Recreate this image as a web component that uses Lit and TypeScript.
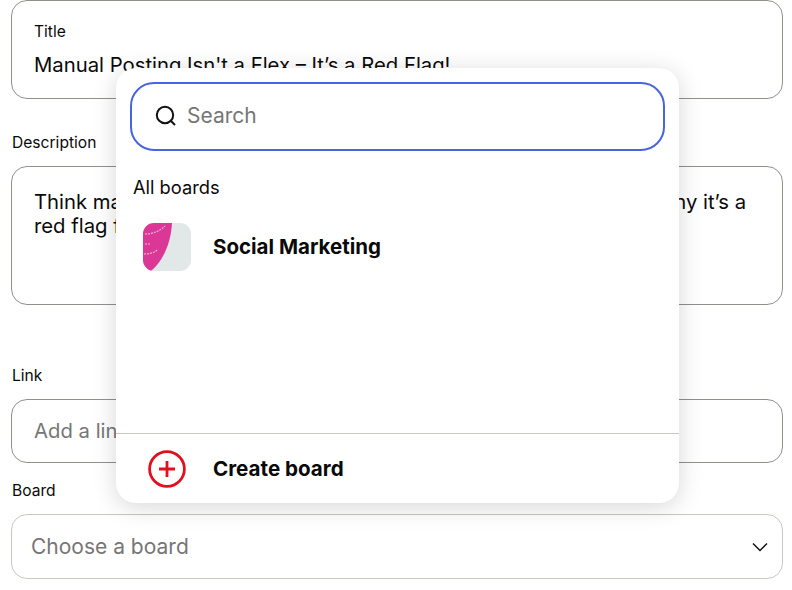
import { LitElement, html, css } from "lit";
import { customElement } from "lit/decorators.js";

@customElement("app-root")
export class AppRoot extends LitElement {
  static styles = css`
    :host {
      display: block;
      position: relative;
      width: 792px;
      height: 590px;
      overflow: hidden;
      background: #fff;
      color: #0a0a0a;
      font-family: Inter, "Noto Sans", sans-serif;
    }
    .form {
      display: flex;
      flex-direction: column;
      padding-left: 11px;
      width: 772px;
    }
    .label {
      font-size: 15.6px;
      line-height: 18px;
      height: 18px;
      margin-left: 1px;
    }
    .box {
      box-sizing: border-box;
      border: 1px solid #91918c;
      border-radius: 16px;
      font-size: 20.3px;
      line-height: 25px;
    }
    .title-box {
      height: 99px;
      padding: 22px 22px 0;
    }
    .title-box .label {
      margin: 0 0 11px;
    }
    .title-box .value {
      white-space: nowrap;
    }
    .desc-label {
      margin-top: 35px;
    }
    .desc-box {
      height: 139px;
      margin-top: 14px;
      padding: 23px 22px 0;
      line-height: 24px;
      white-space: nowrap;
    }
    .link-label {
      margin-top: 62px;
    }
    .link-box {
      height: 64px;
      margin-top: 14px;
      padding: 18px 22px 0;
      color: #767676;
    }
    .board-label {
      margin-top: 19px;
    }
    .board-box {
      display: flex;
      align-items: center;
      justify-content: space-between;
      height: 65px;
      margin-top: 14px;
      padding: 0 13px 0 19px;
      font-size: 21px;
      color: #767676;
      border-color: #c8c8c1;
    }
    .popover {
      position: absolute;
      left: 116px;
      top: 68px;
      width: 563px;
      height: 435px;
      display: flex;
      flex-direction: column;
      background: #fff;
      border-radius: 20px;
      box-shadow: 0 4px 24px rgba(0, 0, 0, 0.16);
    }
    .search {
      box-sizing: border-box;
      display: flex;
      align-items: center;
      gap: 11px;
      height: 69px;
      margin: 14px 14px 0;
      padding: 0 0 2px 23px;
      border: 2px solid #4a63e0;
      border-radius: 24px;
      font-size: 21px;
      color: #767676;
    }
    .all {
      margin: 25px 0 0 17px;
      font-size: 18.3px;
      line-height: 22px;
    }
    .row {
      display: flex;
      align-items: center;
      gap: 22px;
      margin: 25px 0 0 27px;
      font-size: 20.5px;
      font-weight: 700;
    }
    .row span {
      margin-bottom: 2px;
    }
    .thumb {
      display: block;
      width: 48px;
      height: 48px;
      flex: none;
    }
    .spacer {
      flex: 1;
    }
    .create {
      display: flex;
      align-items: center;
      gap: 27px;
      height: 69px;
      padding-left: 32px;
      border-top: 1px solid #c8c8c1;
      font-size: 20.6px;
      font-weight: 700;
    }
    svg {
      display: block;
      flex: none;
    }
  `;

  render() {
    return html`
      <div class="form">
        <div class="box title-box">
          <div class="label">Title</div>
          <div class="value">Manual Posting Isn't a Flex – It’s a Red Flag!</div>
        </div>
        <div class="label desc-label">Description</div>
        <div class="box desc-box">
          Think manual posting makes your brand look super busy? Here’s why it’s a<br />red flag for your brand
        </div>
        <div class="label link-label">Link</div>
        <div class="box link-box">Add a link</div>
        <div class="label board-label">Board</div>
        <div class="box board-box">
          <span>Choose a board</span>
          <svg width="18" height="18" viewBox="0 0 18 18" fill="none" stroke="#111" stroke-width="1.5">
            <path d="M2 5.5 9 12.5l7-7" />
          </svg>
        </div>
      </div>
      <div class="popover">
        <div class="search">
          <svg width="21" height="21" viewBox="0 0 21 21" fill="none" stroke="#111" stroke-width="2">
            <circle cx="10" cy="10" r="8.2" />
            <path d="M16 16l4 4" />
          </svg>
          <span>Search</span>
        </div>
        <div class="all">All boards</div>
        <div class="row">
          <svg class="thumb" viewBox="0 0 48 48">
            <defs>
              <clipPath id="round"><rect width="48" height="48" rx="11" /></clipPath>
            </defs>
            <g clip-path="url(#round)">
              <rect width="48" height="48" fill="#e1e8e7" />
              <path d="M0 0H29C28 20 20 38 8 48H0Z" fill="#db3796" />
              <g fill="none" stroke="#f0b0d6" stroke-width="1.2" stroke-dasharray="2 1">
                <path d="M2 11C10 11 17 8 22 3" />
                <path d="M2 21H8" />
                <path d="M1 31C6 31 11 30 14 27" />
              </g>
            </g>
          </svg>
          <span>Social Marketing</span>
        </div>
        <div class="spacer"></div>
        <div class="create">
          <svg width="38" height="38" viewBox="0 0 38 38" fill="none" stroke="#e1101e" stroke-width="2.8">
            <circle cx="19" cy="19" r="17.4" />
            <path d="M19 11v16M11 19h16" />
          </svg>
          <span>Create board</span>
        </div>
      </div>
    `;
  }
}
